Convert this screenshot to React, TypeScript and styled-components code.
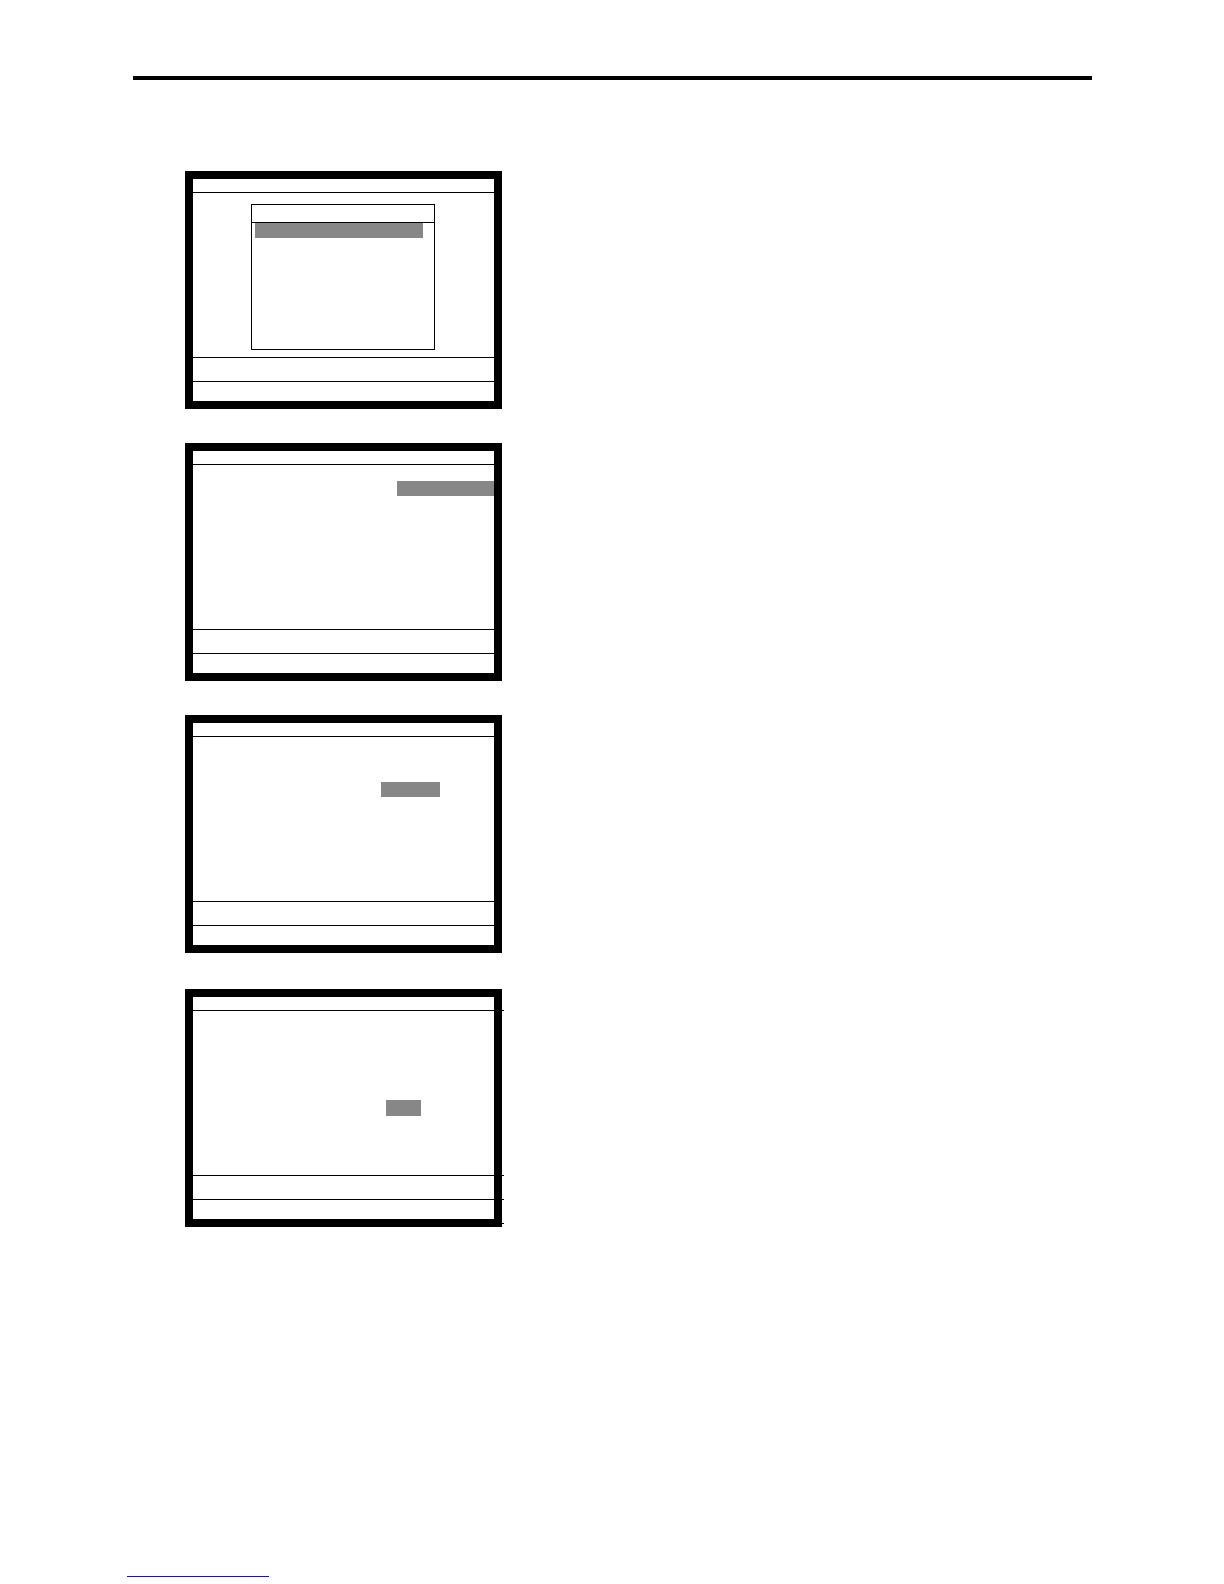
import * as React from 'react'
import styled, { createGlobalStyle } from 'styled-components'

const GlobalStyle = createGlobalStyle`
  html, body {
    margin: 0;
    padding: 0;
    background: #fff;
    font-family: 'Liberation Sans', Arial, sans-serif;
  }
`

const Page = styled.div`
  width: 1224px;
  min-height: 1584px;
  display: flex;
  flex-direction: column;
  background: #fff;
`

const TopRule = styled.div`
  margin: 76px 0 0 133px;
  width: 959px;
  height: 4px;
  background: #000;
`

const ScreenList = styled.div`
  display: flex;
  flex-direction: column;
  margin-top: 91px;
  padding-left: 185px;
`

const Screen = styled.div<{ $space: number }>`
  box-sizing: border-box;
  width: 317px;
  height: 238px;
  margin-top: ${(p) => p.$space}px;
  border: 8px solid #000;
  display: flex;
  flex-direction: column;
  background: #fff;
`

const TitleBar = styled.div<{ $overhang?: boolean }>`
  flex: none;
  height: 13px;
  border-bottom: 1px solid #000;
  margin-right: ${(p) => (p.$overhang ? '-10px' : '0')};
`

const Body = styled.div`
  flex: 1;
  display: flex;
  flex-direction: column;
  align-items: flex-start;
  min-height: 0;
`

const StatusBar = styled.div<{ $overhang?: boolean; $height: number }>`
  flex: none;
  height: ${(p) => p.$height}px;
  border-top: 1px solid #000;
  margin-right: ${(p) => (p.$overhang ? '-10px' : '0')};
`

// short cut mark that shows past the frame's lower edge
const EdgeMark = styled.div`
  flex: none;
  height: 0;
  margin: 4px -10px -5px 0;
  border-top: 1px solid #000;
`

const Highlight = styled.div<{ $top: number; $left: number; $width: number; $height?: number }>`
  flex: none;
  margin: ${(p) => p.$top}px 0 0 ${(p) => p.$left}px;
  width: ${(p) => p.$width}px;
  height: ${(p) => p.$height ?? 15}px;
  background: #878787;
`

const Popup = styled.div`
  box-sizing: border-box;
  margin: 11px 0 0 58px;
  width: 184px;
  height: 146px;
  border: 1px solid #000;
  display: flex;
  flex-direction: column;
  align-items: flex-start;
`

const PopupTitle = styled.div`
  align-self: stretch;
  height: 17px;
  border-bottom: 1px solid #000;
`

const LinkLine = styled.div`
  margin: 349px 0 0 127px;
  width: 142px;
  height: 0;
  border-bottom: 1px solid #1c1c8f;
`

type ScreenSpec = {
  space: number
  overhang?: boolean
  body: React.ReactNode
}

const screens: ScreenSpec[] = [
  {
    space: 0,
    body: (
      <Popup>
        <PopupTitle />
        <Highlight $top={0} $left={3} $width={168} />
      </Popup>
    ),
  },
  { space: 34, body: <Highlight $top={16} $left={204} $width={97} /> },
  { space: 34, body: <Highlight $top={45} $left={188} $width={59} /> },
  { space: 36, overhang: true, body: <Highlight $top={89} $left={193} $width={35} $height={16} /> },
]

export default function App() {
  return (
    <Page>
      <GlobalStyle />
      <TopRule />
      <ScreenList>
        {screens.map((s, i) => (
          <Screen key={i} $space={s.space}>
            <TitleBar $overhang={s.overhang} />
            <Body>{s.body}</Body>
            <StatusBar $height={23} $overhang={s.overhang} />
            <StatusBar $height={19} $overhang={s.overhang} />
            {s.overhang && <EdgeMark />}
          </Screen>
        ))}
      </ScreenList>
      <LinkLine />
    </Page>
  )
}
